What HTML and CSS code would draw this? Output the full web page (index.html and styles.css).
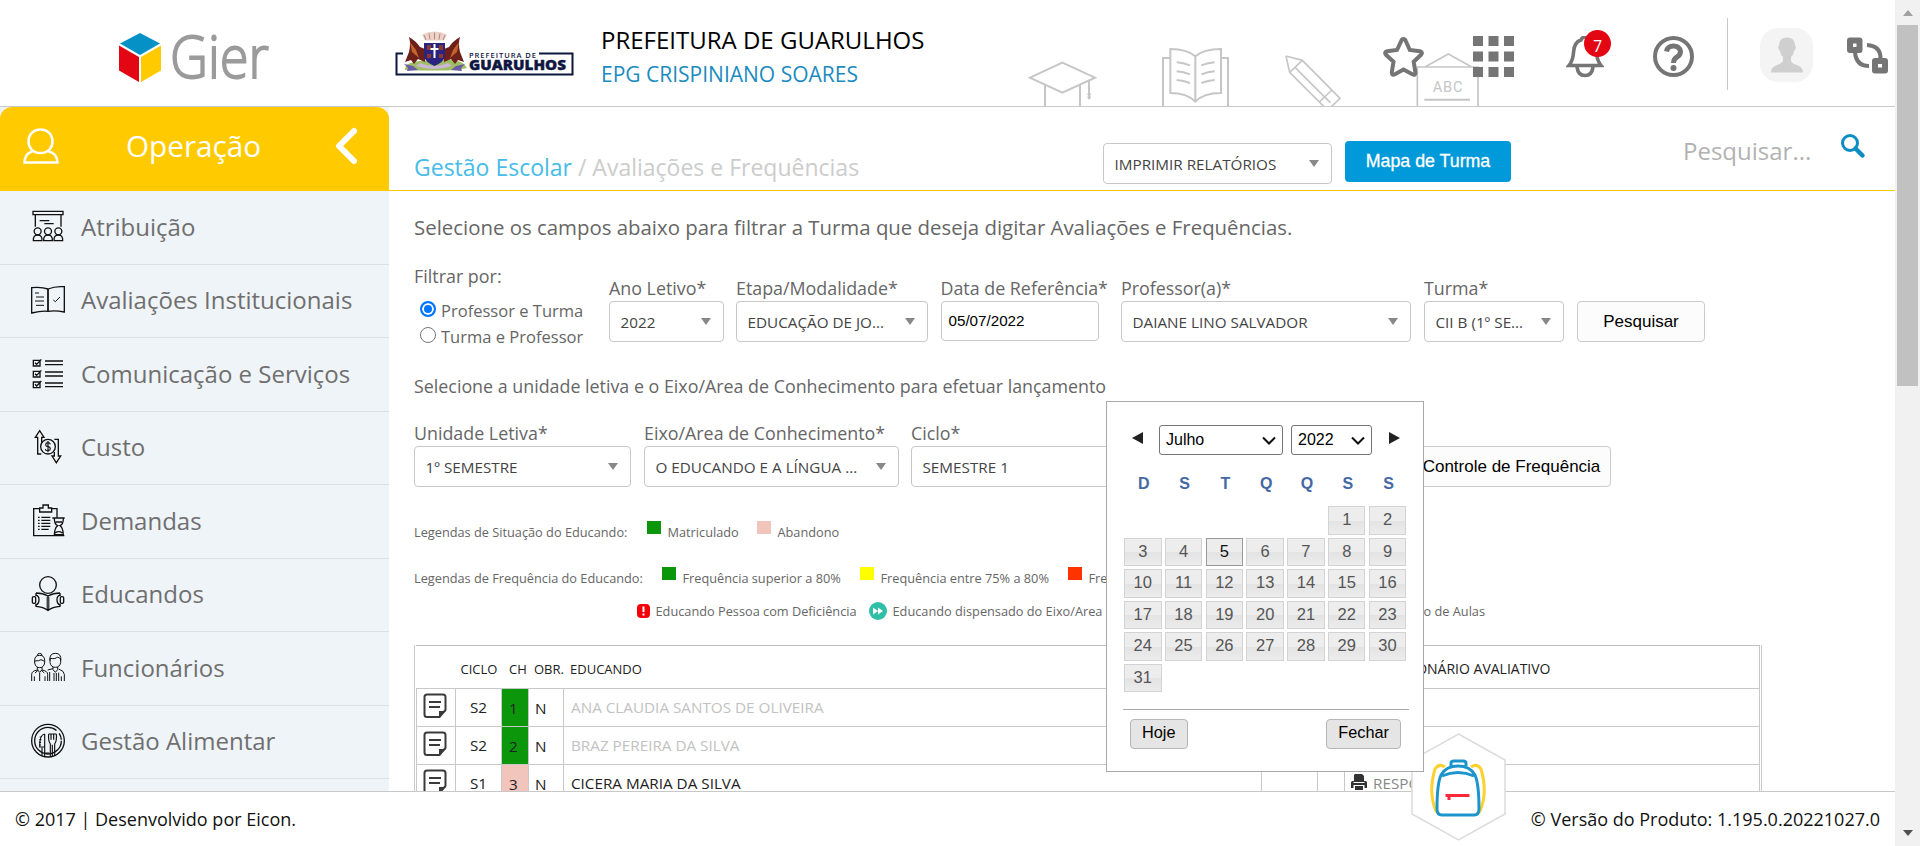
FILE: index.html
```html
<!DOCTYPE html>
<html lang="pt-BR">
<head>
<meta charset="utf-8">
<title>Gier - Avaliações e Frequências</title>
<link rel="stylesheet" href="styles.css">
</head>
<body>
<div class="window">
<div class="app">
  <header class="header">
    <svg class="brand" width="154" height="70" viewBox="0 0 154 70">
      <path fill="#0590c6" d="M22 2 42 12.500 22 24 2 12.500z"/>
      <path fill="#e30613" d="M1 14.500 21 26v25L1 39.500z"/>
      <path fill="#ffca00" d="M43 14.500 23 26v25l20-11.500z"/>
      <text class="brand-name" x="52" y="46.500" textLength="99" lengthAdjust="spacingAndGlyphs">Gier</text>
    </svg>
    <svg class="city" width="180" height="48" viewBox="0 0 180 48">
      <path d="M9 22.500H2.500V43.500h176V22.500H145" fill="none" stroke="#0f1640" stroke-width="2"/>
      <path d="M12 34q12-6 28-4 20-4 30 3l3 4-10 2q-22 1-52 0z" fill="#9fbe63"/>
      <path d="M26 32q14 6 28 0l4 3q-18 6-36 0z" fill="#c9b6d8"/>
      <path d="M10 33l9 2 5 4-11 1 1-3zM71 33l-9 2-5 4 11 1-1-3z" fill="#6a5aa8"/>
      <path d="M15 6q7 4 11 10l5 2v13l-7-3-4 5-3-4-6 2 4-10q2-8 0-15z" fill="#6d1f19"/>
      <path d="M66 6q-7 4-11 10l-5 2v13l7-3 4 5 3-4 6 2-4-10q-2-8 0-15z" fill="#6d1f19"/>
      <path d="M16 11l6 8 3 8-7-6zM65 11l-6 8-3 8 7-6z" fill="#c4632b"/>
      <path d="M30 12h21v13q-1 6-10.500 10Q31 31 30 25z" fill="#2a2380"/>
      <path d="M33 14h4v5h-4zM45 14h4v5h-4zM33 23h4v4h-4zM45 23h4v4h-4z" fill="#8a3b2e"/>
      <path d="M40.500 13v14M36.500 18h8" stroke="#fff" stroke-width="2"/>
      <path d="M28 3.500q6-3 12.500-3t12.500 3L50 9.500H31z" fill="#ecd3ca"/>
      <path d="M30 4l2 5M35 2.500l1 6M40.500 1.500v7M46 2.500l-1 6M51 4l-2 5" stroke="#b5857d"/>
      <text class="city-small" x="75" y="26.500" textLength="67">PREFEITURA DE</text>
      <text class="city-big" x="75" y="38.500" textLength="97" lengthAdjust="spacingAndGlyphs">GUARULHOS</text>
    </svg>
    <div class="unit">
      <div class="unit-city">PREFEITURA DE GUARULHOS</div>
      <div class="unit-school">EPG CRISPINIANO SOARES</div>
    </div>
    <svg class="scenery" width="460" height="66" viewBox="60 120 1380 198">
      <g fill="none" stroke="#c6c6c6" stroke-width="6">
        <path d="M90 233 187 188l98 45-98 45zM135 256v62M240 256v62M267 242v56"/>
        <path d="M262 283h11M262 292h11" stroke-width="5"/>
        <path d="M511 174h-22v144M663 174h21v144M511 147q50 0 75 22 25-22 77-22v132q-52 0-77 26-25-26-75-26zM586 169v136M530 187q20 1 40 9M530 214q20 1 40 9M530 240q20 1 40 9M644 187q-20 1-40 9M644 214q-20 1-40 9M644 240q-20 1-40 9"/>
        <path d="M858 168l49 13 113 114-28 27M858 168l11 49 103 103M869 217l38-36M885 202l106 106M996 270l-38 36" stroke-width="5"/>
        <path d="M1252 318V201h182v117M1276 200l69-38 69 38" stroke-width="5"/>
        <path d="M1273 299h137"/>
      </g>
      <text class="scenery-abc" x="1298" y="277" textLength="90">ABC</text>
    </svg>
    <div class="actions">
      <svg class="i-star" width="41" height="42" viewBox="0 0 41 42"><path d="M20.500 3q1.500 0 2.300 2l4 9 10 1.300q3.500.8 1.200 3.500l-7.300 7 1.700 10.500q.2 3.500-3 2L20.500 33.500 12 38.300q-3.300 1.500-3.200-2L10.500 25.800 3 18.800q-2.200-2.700 1.200-3.500L14 14l4.200-9q.8-2 2.300-2z" fill="#fff" stroke="#757575" stroke-width="4"/></svg>
      <svg class="i-apps" width="41" height="42" viewBox="0 0 41 42"><path fill="#757575" d="M0 0h10v10H0zM15.500 0h10v10h-10zM31 0h10v10H31zM0 15.500h10v10H0zM15.500 15.500h10v10h-10zM31 15.500h10v10H31zM0 31h10v10H0zM15.500 31h10v10h-10zM31 31h10v10H31z"/></svg>
      <div class="bell">
        <svg width="38" height="42" viewBox="0 0 38 42"><path d="M3 29.500q4-5 4.500-13Q8 6 15 4q1-3 4-3t4 3q7 2 7.500 12.500.5 8 4.500 13zM11 31q1 8.500 8 8.500t8-8.500" fill="none" stroke="#757575" stroke-width="3.600"/></svg>
        <span class="badge">7</span>
      </div>
      <svg class="i-help" width="41" height="42" viewBox="0 0 41 42"><circle cx="20.500" cy="20.500" r="18.500" fill="none" stroke="#757575" stroke-width="4"/><path d="M13.500 15.500q1-5.500 7-5.500t7 5.500q0 3.500-3.500 5.500t-3.500 6" fill="none" stroke="#757575" stroke-width="5"/><circle cx="20.500" cy="32" r="3" fill="#757575"/></svg>
      <span class="divider"></span>
      <svg class="i-avatar" width="53" height="54" viewBox="0 0 53 54"><rect width="53" height="54" rx="18" fill="#f4f4f4"/><path fill="#cfcfcf" d="M27 9.500q8 0 8 8 1.500 1 0 4.500l-1 1q-.5 4-3 6v4q1 2.500 7 4.500 5 2 5 7H11q0-5 5-7 6-2 7-4.500v-4q-2.500-2-3-6l-1-1q-1.500-3.500 0-4.500 0-8 8-8z"/></svg>
      <svg class="i-swap" width="41" height="38" viewBox="0 0 41 38"><path d="M3 3.500h9.500v9.500H3zM28 24h10v9.500H28z" fill="none" stroke="#757575" stroke-width="6" stroke-linejoin="round"/><path d="M20 8q14 1 13.500 14M8 15q1 14 14 14" fill="none" stroke="#757575" stroke-width="4"/></svg>
    </div>
  </header>

  <div class="body">
    <nav class="sidebar">
      <div class="module">
        <svg width="36" height="36" viewBox="0 0 36 36" fill="none" stroke="#fff" stroke-width="2.500"><path d="M17.500 1.500c7 0 12 5 12 12 0 6-4 11.500-12 11.500S5.500 19.500 5.500 13.500c0-7 5-12 12-12zM9.500 23.500Q2 25 1.500 34.500h33Q34 25 25.500 23.500"/></svg>
        <span class="module-name">Operação</span>
        <svg width="22" height="38" viewBox="0 0 22 38"><path d="M19 4 4 19l15 15" fill="none" stroke="#fff" stroke-width="6" stroke-linecap="round" stroke-linejoin="round"/></svg>
      </div>
      <a class="item"><svg viewBox="90 56 108 108"><path d="M99 66h90v10H99zM106 78v34M183 78v34M119 94h29M133 103h28"/><circle cx="113" cy="126" r="10.500"/><circle cx="144" cy="126" r="10.500"/><circle cx="175" cy="126" r="10.500"/><path d="M100 154q-1-17 13-17t13 17zM131 154q-1-17 13-17t13 17zM162 154q-1-17 13-17t13 17z"/></svg><span>Atribuição</span></a>
      <a class="item"><svg viewBox="90 276 108 108"><path d="M144 297q-20-7-49-4v76q30-7 49-5 20-4 49 2v-76q-29-2-49 7zv68"/><path d="M144 297v67"/><path d="M105 309h12M108 321h24M105 333h27M108 346h24" stroke-width="3"/><path d="M160 330l6 5 14-14" stroke-width="3"/></svg><span>Avaliações Institucionais</span></a>
      <a class="item"><svg viewBox="90 497 108 108"><path d="M100 513h20v17h-20zM100 546h20v17h-20zM100 578h20v17h-20zM105 520l5 5 14-15M105 553l5 5 14-15M105 585l5 5 14-15M135 515h54M135 526h54M135 548h54M135 560h54M135 581h54M135 592h54"/></svg><span>Comunicação e Serviços</span></a>
      <a class="item"><svg viewBox="90 718 108 108"><circle cx="144" cy="771" r="22"/><path d="M124 793h-11v-50h-7l13-20 13 20h-7v16M163 749h12v50h7l-13 20-13-20h7v-12"/><path d="M151 764q-1-5-8-5-6 1-6 6t7 6 7 6-7 6-8-5M144 754v34" stroke-width="3.500"/></svg><span>Custo</span></a>
      <a class="item"><svg viewBox="90 38 108 108"><path d="M119 58h-18v81h92M156 58h15v27M119 56h10v-9h16v9h10v12h-36z"/><path d="M114 84h5M114 93h5M114 102h5M114 111h5M114 120h5M124 84h27M124 93h27M124 102h27M124 111h27M124 120h22"/><path d="M157 86h37M163 88q0 16 10 21-9 6-10 27h27q-1-21-10-27 10-5 10-21M167 98h19M165 131q11-8 22 0"/></svg><span>Demandas</span></a>
      <a class="item"><svg viewBox="90 259 108 108"><circle cx="144" cy="286" r="25"/><path d="M108 310q20 0 36 9 16-9 36-9M108 310v9M180 310v9M108 342v8q22 2 36 12 14-10 36-12v-8M144 319v42"/><path d="M141 322v36M147 322v36" stroke-width="2"/><rect x="97" y="321" width="10" height="20" rx="4"/><rect x="181" y="321" width="10" height="20" rx="4"/><path d="M107 317q10 0 10 13t-10 16M181 317q-10 0-10 13t10 16"/></svg><span>Educandos</span></a>
      <a class="item"><svg viewBox="90 480 108 108"><g stroke-width="3"><path d="M112 500q0-7 7-7t7 7M104 514q0-15 15-15t15 15v8q-3 14-15 14t-15-14zM103 516q16 0 20-4l11 5M112 534v8l7 8 7-8v-8M95 576v-20q0-10 17-13M143 576v-20q0-10-17-13M119 551v25M103 576v-14M135 576v-14M105 552l10-9M133 552l-10-9"/><path d="M150 515q-3-22 16-22t16 22M150 508q18 3 22-4l10 5v12q-3 14-16 14t-16-14zM159 534v8l7 8 7-8v-8M143 543l16-4M193 576v-20q0-10-17-16M149 549v27M184 576v-14M162 552v24M169 552v24M176 551v25"/></g></svg><span>Funcionários</span></a>
      <a class="item"><svg viewBox="90 700 108 108"><circle cx="144" cy="753" r="49"/><circle cx="144" cy="753" r="40" stroke-dasharray="215 12 20 8"/><g stroke-width="3.500"><path d="M134 733v66M134 733q-16 2-15 39h14M119 742h6M118 750h6M117 758h6M117 766h6M126 774v24M146 733q-2 20 5 30v36M169 733q2 20-5 30v36M146 733h23M153 733v17M161 733v17M157 765v34M136 790h12"/></g></svg><span>Gestão Alimentar</span></a>
      <span class="item last"></span>
    </nav>

    <main class="main">
      <div class="page-head">
        <div class="crumbs"><span class="crumb-link">Gestão Escolar</span> / Avaliações e Frequências</div>
        <div class="select w-report"><span>IMPRIMIR RELATÓRIOS</span><i class="caret"></i></div>
        <button class="btn-blue">Mapa de Turma</button>
        <div class="search">Pesquisar...</div>
        <svg class="search-icon" width="26" height="26" viewBox="0 0 26 26"><circle cx="10" cy="10" r="7.500" fill="none" stroke="#0d8dc3" stroke-width="3"/><path d="M15.500 15.500 22.500 22.500" stroke="#0d8dc3" stroke-width="4.500" stroke-linecap="round"/></svg>
      </div>

      <p class="lead">Selecione os campos abaixo para filtrar a Turma que deseja digitar Avaliações e Frequências.</p>

      <div class="row filters">
        <div class="radios">
          <div class="radios-title">Filtrar por:</div>
          <div class="radio"><i class="dot on"></i><span>Professor e Turma</span></div>
          <div class="radio"><i class="dot"></i><span>Turma e Professor</span></div>
        </div>
        <div class="field w-year"><label>Ano Letivo*</label><div class="select"><span>2022</span><i class="caret"></i></div></div>
        <div class="field w-stage"><label>Etapa/Modalidade*</label><div class="select"><span>EDUCAÇÃO DE JO...</span><i class="caret"></i></div></div>
        <div class="field w-date"><label>Data de Referência*</label><div class="input">05/07/2022</div></div>
        <div class="field w-teacher"><label>Professor(a)*</label><div class="select"><span>DAIANE LINO SALVADOR</span><i class="caret"></i></div></div>
        <div class="field w-class"><label>Turma*</label><div class="select"><span>CII B (1º SE...</span><i class="caret"></i></div></div>
        <button class="btn w-search">Pesquisar</button>
      </div>

      <p class="sub">Selecione a unidade letiva e o Eixo/Area de Conhecimento para efetuar lançamento</p>

      <div class="row units">
        <div class="field w-unit"><label>Unidade Letiva*</label><div class="select"><span>1º SEMESTRE</span><i class="caret"></i></div></div>
        <div class="field w-axis"><label>Eixo/Area de Conhecimento*</label><div class="select"><span>O EDUCANDO E A LÍNGUA ...</span><i class="caret"></i></div></div>
        <div class="field w-cycle"><label>Ciclo*</label><div class="select"><span>SEMESTRE 1</span></div></div>
        <button class="btn w-control">Controle de Frequência</button>
      </div>

      <div class="legend lg-status">
        <span class="lg-title-a">Legendas de Situação do Educando:</span>
        <i class="sq green"></i><span class="lg-matric">Matriculado</span>
        <i class="sq pink"></i><span>Abandono</span>
      </div>
      <div class="legend lg-freq">
        <span class="lg-title-b">Legendas de Frequência do Educando:</span>
        <i class="sq green"></i><span class="lg-f1">Frequência superior a 80%</span>
        <i class="sq yellow"></i><span class="lg-f2">Frequência entre 75% a 80%</span>
        <i class="sq red"></i><span>Fre</span>
      </div>
      <div class="legend lg-icons">
        <svg width="13" height="14" viewBox="0 0 13 14"><rect width="13" height="14" rx="4" fill="#f40009"/><path d="M6.500 2.500v5.500M6.500 9.500v2" stroke="#fff" stroke-width="2"/></svg>
        <span class="lg-pcd">Educando Pessoa com Deficiência</span>
        <svg width="18" height="18" viewBox="0 0 18 18"><circle cx="9" cy="9" r="9" fill="#2fbfa6"/><path d="M4 5.500 9 9l-5 3.500zM9 5.500 14 9l-5 3.500z" fill="#fff"/></svg>
        <span class="lg-disp">Educando dispensado do Eixo/Area</span>
        <span>o de Aulas</span>
      </div>

      <div class="grid">
        <div class="grid-head">
          <span class="c-note"></span><span class="c-cycle">CICLO</span><span class="c-ch">CH</span><span class="c-obr">OBR.</span><span class="c-name">EDUCANDO</span><span class="c-a"></span><span class="c-b"></span><span class="c-quest">QUESTIONÁRIO AVALIATIVO</span>
        </div>
        <div class="grid-row muted">
          <span class="c-note"><svg width="24" height="26" viewBox="0 0 24 26"><path d="M4 1.500h16q2.500 0 2.500 2.500v13l-6 7H4q-2.500 0-2.500-2.500V4q0-2.500 2.500-2.500zM6 9h12M6 14h11" fill="none" stroke="#3a3a3a" stroke-width="2"/><path d="M16 24v-6h7z" fill="#3a3a3a"/></svg></span><span class="c-cycle">S2</span><span class="c-ch green">1</span><span class="c-obr">N</span><span class="c-name">ANA CLAUDIA SANTOS DE OLIVEIRA</span>
        </div>
        <div class="grid-row muted">
          <span class="c-note"><svg width="24" height="26" viewBox="0 0 24 26"><path d="M4 1.500h16q2.500 0 2.500 2.500v13l-6 7H4q-2.500 0-2.500-2.500V4q0-2.500 2.500-2.500zM6 9h12M6 14h11" fill="none" stroke="#3a3a3a" stroke-width="2"/><path d="M16 24v-6h7z" fill="#3a3a3a"/></svg></span><span class="c-cycle">S2</span><span class="c-ch green">2</span><span class="c-obr">N</span><span class="c-name">BRAZ PEREIRA DA SILVA</span>
        </div>
        <div class="grid-row">
          <span class="c-note"><svg width="24" height="26" viewBox="0 0 24 26"><path d="M4 1.500h16q2.500 0 2.500 2.500v13l-6 7H4q-2.500 0-2.500-2.500V4q0-2.500 2.500-2.500zM6 9h12M6 14h11" fill="none" stroke="#3a3a3a" stroke-width="2"/><path d="M16 24v-6h7z" fill="#3a3a3a"/></svg></span><span class="c-cycle">S1</span><span class="c-ch pink">3</span><span class="c-obr">N</span><span class="c-name">CICERA MARIA DA SILVA</span><span class="c-a"></span><span class="c-b"></span><span class="c-quest"><svg width="16" height="16" viewBox="0 0 16 16"><path fill="#333" d="M4 0h7l2 2v5h1.500q1.500 0 1.500 1.500V14h-2.500v-3h-11v3H0V8.500Q0 7 1.500 7H3V1zM4 12h8v4H4z"/><path stroke="#fff" d="M2.500 8.500h11"/></svg>RESPO</span>
        </div>
      </div>
    </main>
  </div>

  <footer class="footer"><span>© 2017 | Desenvolvido por Eicon.</span><span class="version">© Versão do Produto: 1.195.0.20221027.0</span></footer>

  <svg class="backpack" width="95" height="108" viewBox="0 0 95 108">
    <path d="M47.500 1 94 27v54L47.500 107 1 81V27z" fill="#fff" stroke="#dcdcdc" stroke-width="1.500"/>
    <g fill="none" stroke-width="3">
      <path d="M34 34q-6-4-10 2-7 24 1 42 2 3 4 3M60 34q6-4 10 2 7 24-1 42-2 3-4 3" stroke="#ffd02e"/>
      <path d="M26 76q0-25 4-34 5-9 17-9t17 9q4 9 4 34 0 6-5 6H31q-5 0-5-6zM31 43q16-7 32 0M40 33v-3q0-2 3-2h9q3 0 3 2v3" stroke="#1b95cb"/>
      <path d="M34.500 62.500h24M38 62v5" stroke="#ff2838"/>
    </g>
  </svg>

  <div class="picker">
    <div class="picker-nav">
      <i class="prev"></i>
      <div class="native month">Julho<svg width="14" height="9" viewBox="0 0 14 9"><path d="M1 1.500l6 6 6-6" fill="none" stroke="#111" stroke-width="2"/></svg></div>
      <div class="native year">2022<svg width="14" height="9" viewBox="0 0 14 9"><path d="M1 1.500l6 6 6-6" fill="none" stroke="#111" stroke-width="2"/></svg></div>
      <i class="next"></i>
    </div>
    <div class="weekdays"><b>D</b><b>S</b><b>T</b><b>Q</b><b>Q</b><b>S</b><b>S</b></div>
    <div class="days">
      <span class="first">1</span><span>2</span><span>3</span><span>4</span><span class="today">5</span><span>6</span><span>7</span><span>8</span><span>9</span><span>10</span><span>11</span><span>12</span><span>13</span><span>14</span><span>15</span><span>16</span><span>17</span><span>18</span><span>19</span><span>20</span><span>21</span><span>22</span><span>23</span><span>24</span><span>25</span><span>26</span><span>27</span><span>28</span><span>29</span><span>30</span><span>31</span>
    </div>
    <div class="picker-foot"><button>Hoje</button><button>Fechar</button></div>
  </div>
</div>
<div class="scrollbar"><i class="up"></i><div class="thumb"></div><i class="down"></i></div>
</div>
</body>
</html>
```

FILE: styles.css
```css
* { box-sizing: border-box; }
body { margin: 0; background: #fff; font-family: "Open Sans", "Noto Sans", sans-serif; color: #666; }
button, .input, .picker { font-family: "Liberation Sans", Arial, sans-serif; }
p { margin: 0; }
button { margin: 0; padding: 0; white-space: nowrap; }
.window { display: flex; width: 1920px; height: 846px; overflow: hidden; }
.app { position: relative; width: 1895px; height: 846px; display: flex; flex-direction: column; }

/* header */
.header { position: relative; flex: none; height: 107px; border-bottom: 1px solid #c8c8c8; display: flex; align-items: flex-start; }
.brand { margin: 31px 0 0 118px; overflow: visible; }
.brand-name { font: 300 59px "Open Sans", sans-serif; fill: #9b9b9b; stroke: #9b9b9b; stroke-width: 1.800; }
.city { margin: 31px 0 0 122px; }
.city-small { font: 600 7.500px "Open Sans", sans-serif; fill: #0f1640; }
.city-big { font: 800 14.500px "Open Sans", sans-serif; fill: #0f1640; stroke: #0f1640; stroke-width: .4; }
.unit { margin: 23px 0 0 27px; white-space: nowrap; }
.unit-city { font-size: 24px; line-height: 34px; color: #000; }
.unit-school { font-size: 21px; line-height: 34px; color: #1b8bbf; }
.scenery { position: absolute; left: 1020px; top: 40px; }
.scenery-abc { font: 44px Roboto, sans-serif; fill: #c6c6c6; }
.actions { position: relative; margin-left: auto; padding-right: 7px; display: flex; align-items: flex-start; }
.i-star { margin-top: 36px; }
.i-apps { margin: 36px 0 0 49px; }
.bell { position: relative; margin: 36px 0 0 52px; height: 42px; }
.badge { position: absolute; left: 18px; top: -6px; width: 27px; height: 27px; border-radius: 50%; background: #e30613; color: #fff; font-size: 16px; line-height: 33px; text-align: center; }
.i-help { margin: 36px 0 0 49px; }
.divider { width: 1px; height: 72px; margin: 18px 0 0 33px; background: #c8c8c8; }
.i-avatar { margin: 28px 0 0 32px; }
.i-swap { margin: 37px 0 0 34px; }

/* body */
.body { display: flex; height: 684px; overflow: hidden; }
.sidebar { width: 389px; flex: none; background: #eff4f8; }
.module { height: 84px; background: #ffca00; border-radius: 12px 12px 0 0; display: flex; align-items: center; padding: 0 0 6px 23px; color: #fff; }
.module-name { width: 209px; margin: 0 0 2px 67px; font-size: 29.700px; }
.item { height: 73.500px; border-bottom: 1px solid #d9e0e6; display: flex; align-items: center; gap: 15px; padding: 0 0 2px 30px; font-size: 24px; color: #6f6f6f; white-space: nowrap; }
.item svg { width: 36px; height: 36px; fill: none; stroke: #111; stroke-width: 4; }
.item.last { height: 13px; border: 0; }

.main { flex: 1; min-width: 0; }
.page-head { height: 84px; border-bottom: 1px solid #ffca00; display: flex; align-items: flex-start; padding-left: 25px; white-space: nowrap; }
.crumbs { width: 689px; padding-top: 43px; font-size: 23px; line-height: 34px; color: #ccc; }
.crumb-link { color: #46bce8; }
.page-head .select { margin-top: 36px; }
.btn-blue { margin: 34px 0 0 13px; width: 166px; height: 41px; border: 0; border-radius: 4px; background: #0099d9; color: #fff; font-size: 17.800px; -webkit-text-stroke: .3px #fff; }
.search { margin: 27px 0 0 172px; width: 157px; font-size: 24px; line-height: 34px; color: #b2b2b2; }
.search-icon { margin-top: 26px; }

.lead { margin: 21px 0 0 25px; font-size: 20.400px; line-height: 30px; white-space: nowrap; }
.sub { margin: 23px 0 0 25px; font-size: 17.850px; line-height: 26px; white-space: nowrap; }
.row { display: flex; margin-left: 25px; }
.filters { margin-top: 21px; height: 87px; }
.radios { width: 195px; }
.radios-title { font-size: 17.900px; line-height: 26px; margin-bottom: 8px; }
.radio { display: flex; align-items: center; gap: 5px; padding-left: 6px; height: 26px; font-size: 16.550px; white-space: nowrap; }
.dot { width: 16px; height: 16px; border: 1.500px solid #767676; border-radius: 50%; margin-bottom: 3px; }
.dot.on { border: 2px solid #0075ff; background: #0075ff; box-shadow: inset 0 0 0 2px #fff; }
.field label { display: block; font-size: 17.850px; line-height: 25px; height: 25px; white-space: nowrap; }
.filters .field { margin-top: 13px; }
.units { margin-top: 22px; }
.select { height: 41px; border: 1px solid #c8c8c8; border-radius: 4px; background: #fff; display: flex; align-items: center; justify-content: space-between; padding: 0 12px 0 10.500px; font-size: 15.250px; color: #444; white-space: nowrap; }
.caret { border: 5px solid transparent; border-top: 7px solid #888; border-bottom: 0; margin-bottom: 1px; }
.input { height: 40px; border: 1px solid #c8c8c8; border-radius: 4px; padding: 0 7px; font-size: 15.200px; line-height: 37px; color: #000; }
.btn { height: 41px; border: 1px solid #ccc; border-radius: 4px; background: #fcfcfc; font-size: 17px; color: #000; }
.w-report { width: 229px; }
.w-year { width: 115px; }
.w-stage { width: 192px; margin-left: 12px; }
.w-date { width: 158px; margin-left: 12.500px; }
.w-teacher { width: 290px; margin-left: 22.500px; }
.w-class { width: 140px; margin-left: 13px; }
.w-search { width: 128px; margin: 38px 0 0 13px; }
.w-unit { width: 217px; }
.w-axis { width: 255px; margin-left: 13px; }
.w-cycle { width: 240px; margin-left: 12px; }
.w-control { width: 199px; margin: 25px 0 0 261px; }

/* legends */
.legend { margin-left: 25px; height: 20px; display: flex; align-items: center; font-size: 12.750px; line-height: 20px; white-space: nowrap; }
.lg-status { margin-top: 35px; }
.lg-freq { margin-top: 26px; }
.lg-icons { margin: 13px 0 0 248px; }
.sq { width: 14px; height: 13px; margin: -9px 6.500px 0 0; }
.green { background: #0c960c; }
.pink { background: #f1c5bb; }
.yellow { background: #ff0; }
.red { background: #ff3300; }
.lg-title-a { width: 233px; }
.lg-title-b { width: 248px; }
.lg-matric { width: 89.500px; }
.lg-f1 { width: 177.500px; }
.lg-f2 { width: 187.500px; }
.lg-pcd { width: 213.500px; margin-left: 5.500px; }
.lg-disp { width: 531px; margin-left: 5.500px; }

/* student table */
.grid { margin: 24px 0 0 25px; width: 1348px; height: 170px; border-left: 1px solid #c8c8c8; border-right: 1px solid #c8c8c8; padding: 0 1px; color: #222; }
.grid-head, .grid-row { display: flex; width: 1344px; border-right: 1px solid #c8c8c8; border-bottom: 1px solid #c8c8c8; }
.grid-head { height: 44px; border-top: 1px solid #c0c0c0; font-size: 13px; line-height: 46px; }
.grid-row { height: 38px; font-size: 15.250px; line-height: 36px; border-left: 1px solid #c8c8c8; }
.grid-row > span { border-right: 1px solid #c8c8c8; }
.c-note { width: 39px; padding: 4px 0 0 6px; line-height: 0; }
.c-cycle { width: 46px; text-align: center; }
.c-ch { width: 27px; padding-left: 7px; line-height: 38px; }
.c-obr { width: 35px; padding-left: 6px; line-height: 38px; }
.grid-head .c-obr { padding-left: 5px; white-space: nowrap; line-height: 46px; }
.grid-head .c-ch { line-height: 46px; }
.grid-head .c-note { width: 40px; }
.c-name { width: 698px; padding-left: 7px; }
.grid-head .c-name { padding-left: 6px; }
.muted .c-name { color: #c2c2c2; border-right-color: transparent; }
.c-a { width: 56px; }
.c-b { width: 27px; }
.c-quest { padding-left: 6px; flex: 1; white-space: nowrap; }
.grid-head .c-quest { font-size: 14px; padding-left: 23px; }
.grid-row > .c-quest { color: #888; border-right: 0; }
.c-quest svg { margin-right: 6px; vertical-align: -1px; }

.footer { flex: none; height: 55px; border-top: 1px solid #c8c8c8; background: #fff; display: flex; justify-content: space-between; padding: 0 15px; font-size: 18px; line-height: 55px; color: #111; position: relative; }
.backpack { position: absolute; left: 1411px; top: 733px; }

/* date picker */
.picker { position: absolute; left: 1106px; top: 401px; width: 318px; height: 371px; border: 1px solid #a9a9a9; background: #fff; padding: 23px 15px 0 17px; color: #555; }
.picker-nav { display: flex; align-items: center; height: 30px; padding-left: 8px; }
.prev, .next { border: 6px solid transparent; border-right: 11px solid #222; border-left: 0; margin-bottom: 4px; }
.next { border-left: 11px solid #222; border-right: 0; margin-left: 17px; }
.native { height: 30px; border: 1px solid #767676; border-radius: 3px; display: flex; align-items: center; justify-content: space-between; padding: 0 6px; font-size: 16px; color: #000; }
.month { width: 124px; margin-left: 16px; }
.year { width: 81px; margin-left: 8px; }
.weekdays, .days { display: grid; grid-template-columns: repeat(7, 37.500px); column-gap: 3.300px; text-align: center; }
.weekdays { margin-top: 19px; font-size: 16px; line-height: 20px; color: #4468a4; padding-left: 1px; }
.days { margin-top: 12px; grid-auto-rows: 28.500px; row-gap: 3.100px; font-size: 16.500px; line-height: 25px; }
.days span { border: 1px solid #d3d3d3; background: linear-gradient(#ededed 50%, #e3e3e3 51%, #ececec); }
.days .first { grid-column: 6; }
.days .today { border-color: #999; color: #111; }
.picker-foot { margin: 17px -1px 0 -1px; border-top: 1px solid #aaa; display: flex; justify-content: space-between; padding: 9px 8px 0 7px; }
.picker-foot button { height: 30px; border: 1px solid #b5b5b5; border-radius: 4px; background: #e5e5e5; font-size: 16.300px; line-height: 25px; color: #000; padding: 0 11px 3px; }

/* window scrollbar */
.scrollbar { width: 25px; background: #f1f1f1; display: flex; flex-direction: column; align-items: center; }
.up, .down { border: 5px solid transparent; }
.up { border-bottom: 6px solid #a0a0a0; border-top: 0; margin-top: 10px; }
.thumb { width: 21px; height: 361px; margin-top: 9px; background: #c1c1c1; }
.down { border-top: 6px solid #505050; border-bottom: 0; margin: auto 0 10px; }
```
